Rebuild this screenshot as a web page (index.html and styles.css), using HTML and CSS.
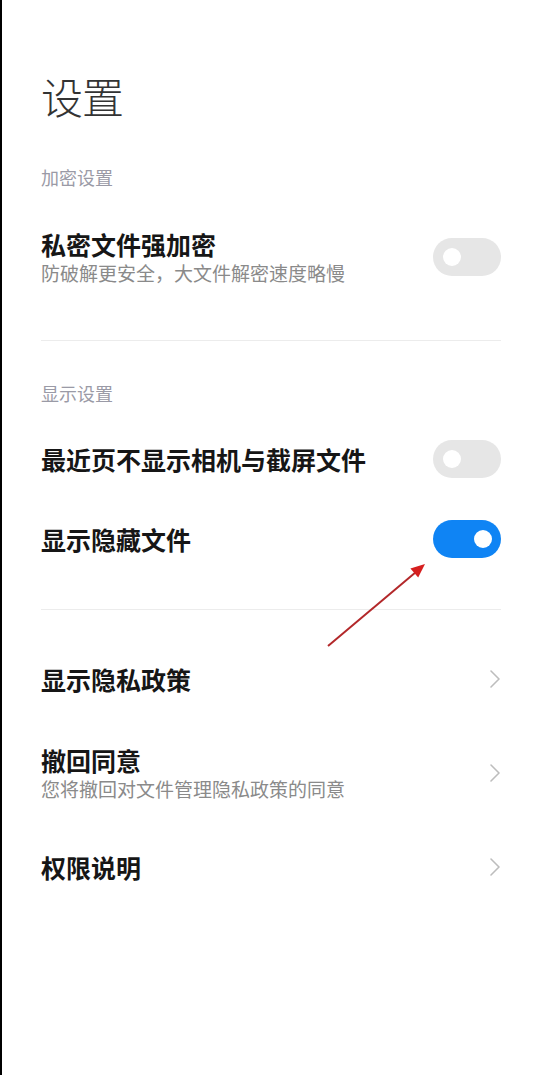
FILE: index.html
```html
<!DOCTYPE html>
<html lang="zh-CN">
<head>
<meta charset="utf-8">
<title>设置</title>
<link rel="stylesheet" href="styles.css">
</head>
<body>
<div class="page">
  <header class="page-header">
    <h1 class="page-title">设置</h1>
  </header>

  <section class="group">
    <h2 class="group-title">加密设置</h2>
    <div class="row row-tall">
      <div class="row-text">
        <div class="row-title">私密文件强加密</div>
        <div class="row-sub">防破解更安全，大文件解密速度略慢</div>
      </div>
      <span class="toggle"><span class="knob"></span></span>
    </div>
  </section>

  <hr class="divider divider-1">

  <section class="group">
    <h2 class="group-title">显示设置</h2>
    <div class="row row-toggle first-toggle">
      <div class="row-text">
        <div class="row-title">最近页不显示相机与截屏文件</div>
      </div>
      <span class="toggle"><span class="knob"></span></span>
    </div>
    <div class="row row-toggle">
      <div class="row-text">
        <div class="row-title">显示隐藏文件</div>
      </div>
      <span class="toggle on"><span class="knob"></span></span>
    </div>
  </section>

  <hr class="divider divider-2">

  <section class="group nav-group">
    <div class="row row-nav">
      <div class="row-text">
        <div class="row-title">显示隐私政策</div>
      </div>
      <svg class="chevron" width="12" height="20" viewBox="0 0 12 20"><polyline points="2,2 10,10 2,18" fill="none" stroke="#bdbdbd" stroke-width="1.6" stroke-linecap="round" stroke-linejoin="round"/></svg>
    </div>
    <div class="row row-nav">
      <div class="row-text">
        <div class="row-title">撤回同意</div>
        <div class="row-sub">您将撤回对文件管理隐私政策的同意</div>
      </div>
      <svg class="chevron" width="12" height="20" viewBox="0 0 12 20"><polyline points="2,2 10,10 2,18" fill="none" stroke="#bdbdbd" stroke-width="1.6" stroke-linecap="round" stroke-linejoin="round"/></svg>
    </div>
    <div class="row row-nav">
      <div class="row-text">
        <div class="row-title">权限说明</div>
      </div>
      <svg class="chevron" width="12" height="20" viewBox="0 0 12 20"><polyline points="2,2 10,10 2,18" fill="none" stroke="#bdbdbd" stroke-width="1.6" stroke-linecap="round" stroke-linejoin="round"/></svg>
    </div>
  </section>

  <svg class="arrow" width="540" height="1075" viewBox="0 0 540 1075">
    <line x1="328" y1="646" x2="416" y2="572" stroke="#b3282a" stroke-width="2"/>
    <polygon points="425,564 418.2,577.6 410.4,568.4" fill="#d61f1f"/>
  </svg>
</div>
</body>
</html>
```

FILE: styles.css
```css
html, body {
  margin: 0;
  padding: 0;
  background: #ffffff;
}

body {
  font-family: "Noto Sans CJK SC", "Noto Sans", sans-serif;
  color: #111;
}

.page {
  position: relative;
  box-sizing: border-box;
  width: 540px;
  min-height: 1075px;
  border-left: 2px solid #000;
  padding: 0 39px;
}

.page-header {
  padding-top: 68px;
}

.page-title {
  margin: 0;
  font-size: 42px;
  line-height: 56px;
  font-weight: 300;
  color: #333;
  letter-spacing: -1px;
}

.group-title {
  margin: 0;
  font-size: 18px;
  line-height: 24px;
  font-weight: 400;
  color: #9a9aa6;
}

.page-header + .group .group-title {
  margin-top: 41px;
}

.row {
  display: flex;
  align-items: center;
  justify-content: space-between;
}

.row-tall {
  height: 94px;
  margin-top: 21px;
}

.row-toggle {
  height: 80px;
}

.first-toggle {
  margin-top: 14px;
}

.row-nav {
  height: 94px;
}

.row-title {
  font-size: 25px;
  line-height: 32px;
  font-weight: 700;
  color: #161616;
}

.row-sub {
  font-size: 19px;
  line-height: 26px;
  color: #8a8a8a;
}

.divider {
  margin: 0;
  border: 0;
  height: 1px;
  background: #ececec;
}

.divider-1 {
  margin-top: 36px;
  margin-bottom: 40px;
}

.divider-2 {
  margin-top: 30px;
}

.nav-group {
  margin-top: 22px;
}

.toggle {
  box-sizing: border-box;
  width: 68px;
  height: 38px;
  border-radius: 19px;
  background: #e6e6e6;
  padding: 0 10px;
  display: flex;
  align-items: center;
  justify-content: flex-start;
  flex-shrink: 0;
}

.toggle.on {
  background: #0f84f4;
  justify-content: flex-end;
  padding: 0 9px;
}

.knob {
  width: 18px;
  height: 18px;
  border-radius: 50%;
  background: #ffffff;
}

.chevron {
  display: block;
  flex-shrink: 0;
}

.arrow {
  position: absolute;
  left: -2px;
  top: 0;
  pointer-events: none;
}
```
